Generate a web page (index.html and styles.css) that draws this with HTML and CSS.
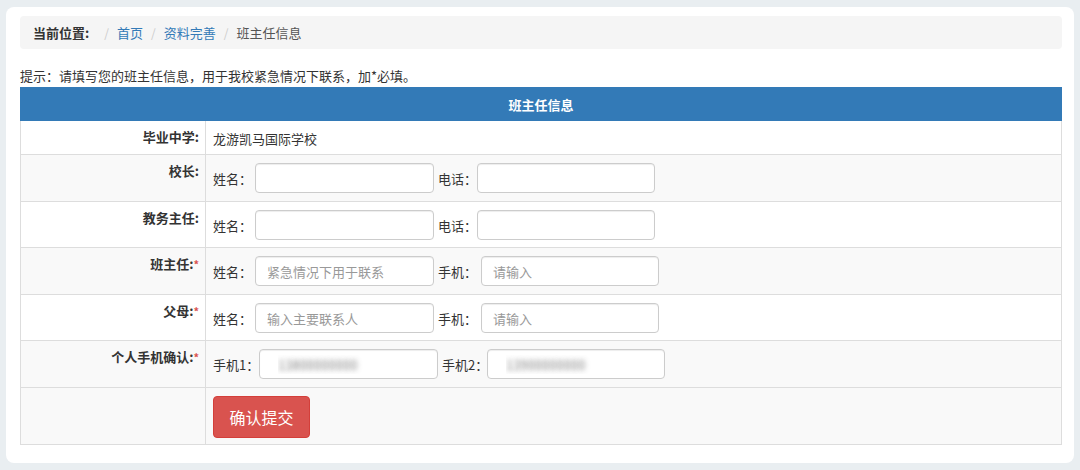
FILE: index.html
```html
<!DOCTYPE html>
<html lang="zh-CN">
<head>
<meta charset="utf-8">
<title>班主任信息</title>
<link rel="stylesheet" href="styles.css">
</head>
<body>
<div class="card">
  <div class="crumb">
    <span class="crumb-title">当前位置:</span>
    <span class="sep">/</span>
    <a class="crumb-link" href="#">首页</a>
    <span class="sep">/</span>
    <a class="crumb-link" href="#">资料完善</a>
    <span class="sep">/</span>
    <span class="crumb-cur">班主任信息</span>
  </div>
  <p class="hint">提示：请填写您的班主任信息，用于我校紧急情况下联系，加*必填。</p>
  <table class="info">
    <colgroup><col class="col-lbl"><col class="col-val"></colgroup>
    <tr class="head"><th colspan="2">班主任信息</th></tr>
    <tr class="r-school">
      <td class="lbl-cell">毕业中学:</td>
      <td class="val-cell"><span class="school">龙游凯马国际学校</span></td>
    </tr>
    <tr class="r-field grey">
      <td class="lbl-cell">校长:</td>
      <td class="val-cell">
        <div class="fields">
          <span class="flabel w42">姓名：</span><input class="inp" type="text">
          <span class="flabel w39 ml4">电话：</span><input class="inp w178" type="text">
        </div>
      </td>
    </tr>
    <tr class="r-field h46">
      <td class="lbl-cell">教务主任:</td>
      <td class="val-cell">
        <div class="fields">
          <span class="flabel w42">姓名：</span><input class="inp" type="text">
          <span class="flabel w39 ml4">电话：</span><input class="inp w178" type="text">
        </div>
      </td>
    </tr>
    <tr class="r-field grey">
      <td class="lbl-cell">班主任:<span class="req">*</span></td>
      <td class="val-cell">
        <div class="fields">
          <span class="flabel w42">姓名：</span><input class="inp" type="text" placeholder="紧急情况下用于联系">
          <span class="flabel w43 ml4">手机：</span><input class="inp w178" type="text" placeholder="请输入">
        </div>
      </td>
    </tr>
    <tr class="r-field h46">
      <td class="lbl-cell">父母:<span class="req">*</span></td>
      <td class="val-cell">
        <div class="fields">
          <span class="flabel w42">姓名：</span><input class="inp" type="text" placeholder="输入主要联系人">
          <span class="flabel w43 ml4">手机：</span><input class="inp w178" type="text" placeholder="请输入">
        </div>
      </td>
    </tr>
    <tr class="r-field grey">
      <td class="lbl-cell">个人手机确认:<span class="req">*</span></td>
      <td class="val-cell">
        <div class="fields">
          <span class="flabel w46">手机1：</span><input class="inp blur" type="text" value="13800000000">
          <span class="flabel w45 ml4">手机2：</span><input class="inp w178 blur" type="text" value="13900000000">
        </div>
      </td>
    </tr>
    <tr class="r-btn grey">
      <td class="lbl-cell"></td>
      <td class="val-cell"><button class="submit" type="button">确认提交</button></td>
    </tr>
  </table>
</div>
</body>
</html>
```

FILE: styles.css
```css
* { box-sizing: border-box; }
html, body { margin: 0; padding: 0; }
body {
  background: #e9eef1;
  font-family: "Noto Sans CJK SC", "Microsoft YaHei", "Liberation Sans", sans-serif;
  font-size: 13px;
  color: #333;
  padding: 7px 6px 0 6px;
}
.card {
  background: #fff;
  border-radius: 8px;
  padding: 9px 12px 19px 14px;
  height: 456px;
}
.crumb {
  background: #f5f5f5;
  border-radius: 4px;
  height: 33px;
  display: flex;
  align-items: center;
  padding-left: 13px;
  line-height: 18px;
}
.crumb-title { font-weight: bold; color: #333; margin-right: 7px; }
.sep { color: #ccc; padding: 0 8px; font-size: 12px; }
.crumb-link { color: #337ab7; text-decoration: none; }
.crumb-cur { color: #555; }
.hint {
  margin: 0;
  padding-top: 18px;
  height: 38px;
  line-height: 18px;
  color: #333;
}
.info {
  width: 1042px;
  border-collapse: collapse;
  table-layout: fixed;
}
.col-lbl { width: 185px; }
.info td, .info th {
  border: 1px solid #ddd;
  padding: 0;
}
.head th {
  background: #337ab7;
  border-color: #337ab7;
  color: #fff;
  font-weight: bold;
  height: 33px;
  text-align: center;
  vertical-align: middle;
}
.info tr { background: #fff; }
.info tr.grey { background: #f9f9f9; }
.lbl-cell {
  text-align: right;
  font-weight: bold;
  vertical-align: top;
  padding: 7px 6px 0 0 !important;
  line-height: 18px;
  color: #333;
}
.val-cell {
  vertical-align: top;
  padding: 8px 0 0 7px !important;
}
.r-school td { height: 34px; }
.school { line-height: 18px; color: #333; }
.r-field td { height: 47px; }
.r-field.h46 td { height: 46px; }
.r-btn td { height: 57px; }
.fields {
  display: flex;
  align-items: center;
  height: 30px;
}
.flabel { display: inline-block; color: #333; white-space: nowrap; }
.w39 { width: 39px; }
.w42 { width: 42px; }
.w43 { width: 43px; }
.w45 { width: 45px; }
.w46 { width: 46px; }
.ml4 { margin-left: 4px; }
.inp {
  width: 179px;
  height: 30px;
  border: 1px solid #ccc;
  border-radius: 4px;
  box-shadow: inset 0 1px 1px rgba(0,0,0,.075);
  padding: 0 11px;
  font-family: inherit;
  font-size: 13px;
  color: #555;
  background: #fff;
  outline: none;
}
.inp.w178 { width: 178px; }
.inp::placeholder { color: #999; }
.inp.blur {
  color: transparent;
  text-shadow: 0 0 5px rgba(80,80,80,.7);
  padding-left: 18px;
}
.req { color: #d9534f; font-size: 11px; vertical-align: top; }
.submit {
  width: 97px;
  height: 42px;
  background: #d9534f;
  border: 1px solid #d43f3a;
  border-radius: 4px;
  color: #fff;
  font-family: inherit;
  font-size: 16px;
  padding: 0;
}
```
